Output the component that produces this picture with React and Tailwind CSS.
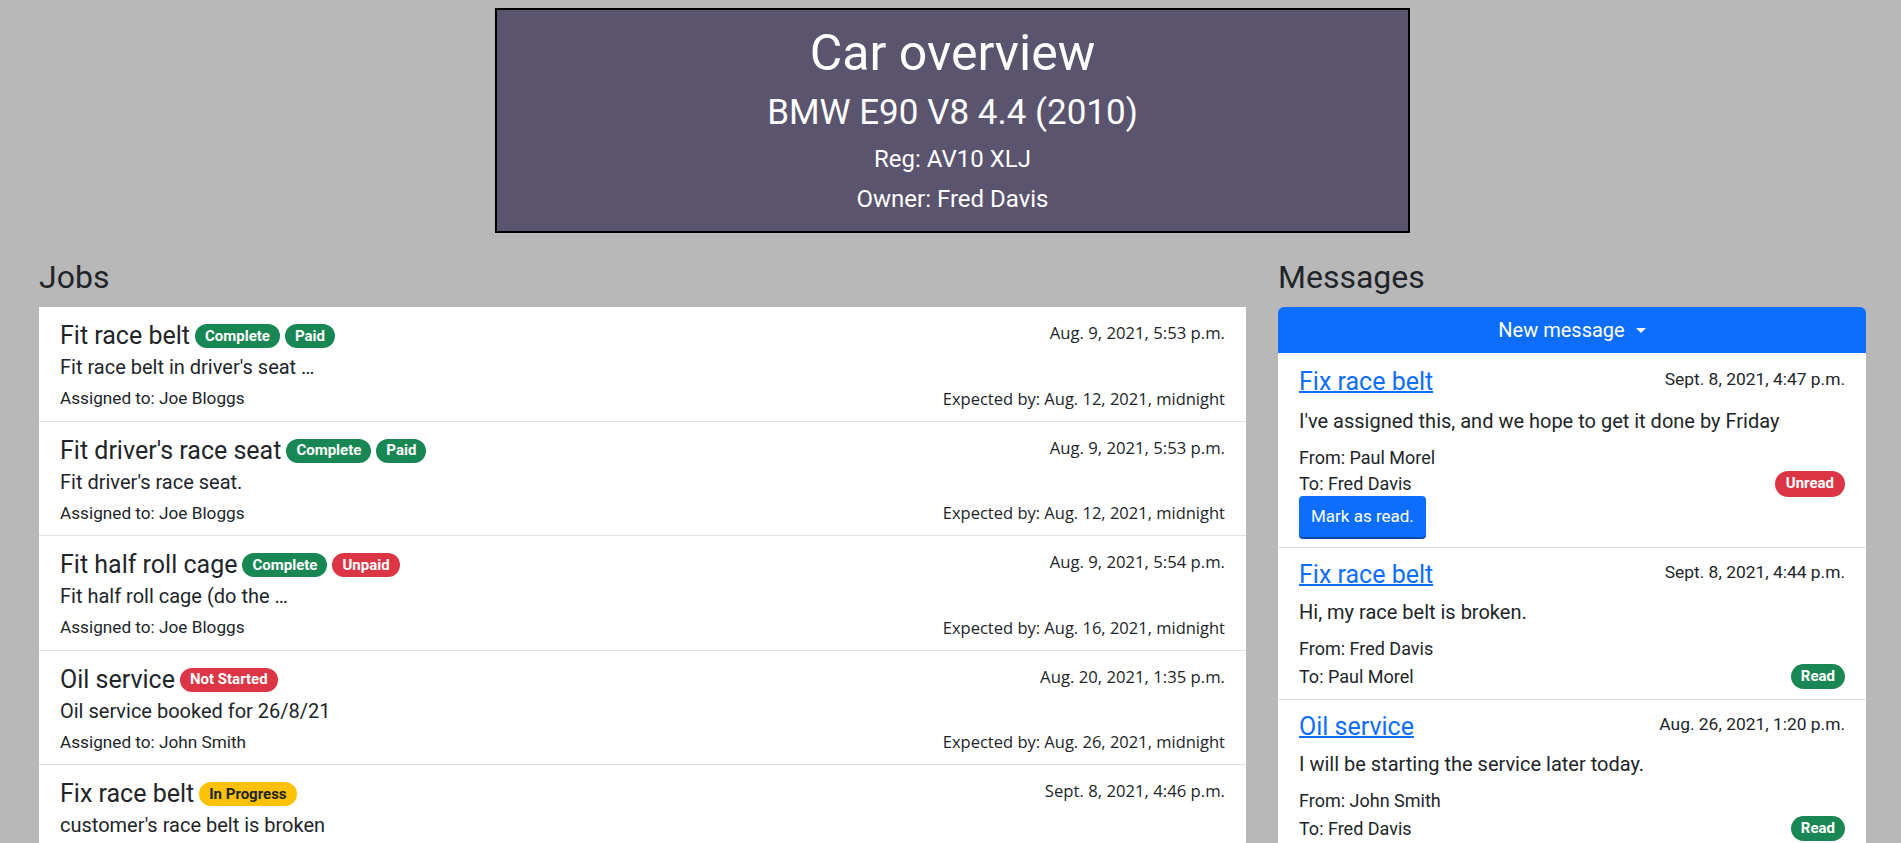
import React from "react";

const badgeColors = {
  green: "bg-[#198754] text-white",
  red: "bg-[#dc3545] text-white",
  yellow: "bg-[#ffc107] text-[#212529]",
};

const jobs = [
  {
    title: "Fit race belt",
    badges: [["Complete", "green"], ["Paid", "green"]],
    desc: "Fit race belt in driver's seat …",
    created: "Aug. 9, 2021, 5:53 p.m.",
    assigned: "Joe Bloggs",
    expected: "Aug. 12, 2021, midnight",
  },
  {
    title: "Fit driver's race seat",
    badges: [["Complete", "green"], ["Paid", "green"]],
    desc: "Fit driver's race seat.",
    created: "Aug. 9, 2021, 5:53 p.m.",
    assigned: "Joe Bloggs",
    expected: "Aug. 12, 2021, midnight",
  },
  {
    title: "Fit half roll cage",
    badges: [["Complete", "green"], ["Unpaid", "red"]],
    desc: "Fit half roll cage (do the …",
    created: "Aug. 9, 2021, 5:54 p.m.",
    assigned: "Joe Bloggs",
    expected: "Aug. 16, 2021, midnight",
  },
  {
    title: "Oil service",
    badges: [["Not Started", "red"]],
    desc: "Oil service booked for 26/8/21",
    created: "Aug. 20, 2021, 1:35 p.m.",
    assigned: "John Smith",
    expected: "Aug. 26, 2021, midnight",
  },
  {
    title: "Fix race belt",
    badges: [["In Progress", "yellow"]],
    desc: "customer's race belt is broken",
    created: "Sept. 8, 2021, 4:46 p.m.",
    assigned: "Joe Bloggs",
    expected: "Sept. 10, 2021, midnight",
  },
];

const messages = [
  {
    title: "Fix race belt",
    date: "Sept. 8, 2021, 4:47 p.m.",
    body: "I've assigned this, and we hope to get it done by Friday",
    from: "Paul Morel",
    to: "Fred Davis",
    read: false,
  },
  {
    title: "Fix race belt",
    date: "Sept. 8, 2021, 4:44 p.m.",
    body: "Hi, my race belt is broken.",
    from: "Fred Davis",
    to: "Paul Morel",
    read: true,
  },
  {
    title: "Oil service",
    date: "Aug. 26, 2021, 1:20 p.m.",
    body: "I will be starting the service later today.",
    from: "John Smith",
    to: "Fred Davis",
    read: true,
  },
];

const Badge = ({ label, color }) => (
  <span
    className={`inline-flex items-center h-[24px] px-[10px] rounded-full text-[15px] font-bold leading-none ${badgeColors[color]}`}
  >
    {label}
  </span>
);

const JobRow = ({ job }) => (
  <div className="border-b border-[#dee2e6] px-[21px] pt-[14px] pb-[5.6px]">
    {/* Title + created date */}
    <div className="flex justify-between items-start h-[30px]">
      <div className="flex items-center gap-[5px] h-[30px]">
        <span className="text-[25px] leading-[30px]">{job.title}</span>
        {job.badges.map(([label, color]) => (
          <Badge key={label} label={label} color={color} />
        ))}
      </div>
      <span className="font-['Open_Sans',sans-serif] text-[16.7px] leading-[24px]">
        {job.created}
      </span>
    </div>
    <div className="text-[20px] leading-[32px] h-[32px]">{job.desc}</div>
    <div className="flex justify-between items-center h-[32px]">
      <span className="text-[17.2px]">Assigned to: {job.assigned}</span>
      <span className="font-['Open_Sans',sans-serif] text-[16.5px]">
        Expected by: {job.expected}
      </span>
    </div>
  </div>
);

const MessageRow = ({ msg, first }) => (
  <div
    className={`border-b border-[#dee2e6] px-[21px] ${
      first ? "pt-[14px] pb-[10px]" : "pt-[12px] pb-[8px]"
    }`}
  >
    <div className="flex justify-between items-start h-[29px]">
      <a
        href="#"
        className="text-[25px] leading-[29px] text-[#0d6efd] underline decoration-[1.5px]"
      >
        {msg.title}
      </a>
      <span className="text-[17.4px] leading-[24px]">{msg.date}</span>
    </div>
    <div
      className={`text-[20px] leading-[27px] h-[27px] ${
        first ? "mt-[12px]" : "mt-[10px]"
      }`}
    >
      {msg.body}
    </div>
    <div className="mt-[9px] text-[18px] leading-[27px] h-[27px]">
      From: {msg.from}
    </div>
    <div
      className={`flex justify-between items-center text-[18px] ${
        first ? "h-[25px]" : "h-[29px]"
      }`}
    >
      <span>To: {msg.to}</span>
      {msg.read ? (
        <span className="inline-flex items-center h-[25px] px-[10px] rounded-full text-[15px] font-bold leading-none bg-[#198754] text-white">
          Read
        </span>
      ) : (
        <span className="inline-flex items-center h-[26px] px-[11px] rounded-full text-[15px] font-bold leading-none bg-[#dc3545] text-white">
          Unread
        </span>
      )}
    </div>
    {!msg.read && (
      <button className="h-[41px] px-[12px] rounded-[4px] bg-[#0d6efd] text-white text-[17px] shadow-[0_2px_0_#0a4aa8]">
        Mark as read.
      </button>
    )}
  </div>
);

export default function App() {
  return (
    <div className="min-h-screen bg-[#b8b8b8] text-[#212529] font-['Roboto',sans-serif] pt-[8px]">
      {/* Car header */}
      <div className="pl-[4px]">
        <div className="w-[915px] mx-auto border-2 border-black bg-[#5a546e] text-white text-center pt-[14px] pb-[18px]">
          <div className="text-[50px] leading-[58px]">Car overview</div>
          <div className="text-[35px] leading-[40px] mt-[10.5px]">
            BMW E90 V8 4.4 (2010)
          </div>
          <div className="text-[24px] leading-[28px] mt-[12.5px]">
            Reg: AV10 XLJ
          </div>
          <div className="text-[24px] leading-[28px] mt-[12px]">
            Owner: Fred Davis
          </div>
        </div>
      </div>

      <div className="flex pl-[39px] gap-[32px] mt-[25px]">
        {/* Jobs */}
        <div className="w-[1207px] shrink-0">
          <h2 className="text-[32px] leading-[38px] h-[38px] mb-[11px]">Jobs</h2>
          <div className="bg-white">
            {jobs.map((job, i) => (
              <JobRow key={i} job={job} />
            ))}
          </div>
        </div>

        {/* Messages */}
        <div className="w-[588px] shrink-0">
          <h2 className="text-[32px] leading-[38px] h-[38px] mb-[11px]">
            Messages
          </h2>
          <button className="w-full h-[46px] rounded-t-[6px] bg-[#0d6efd] text-white text-[20px] flex items-center justify-center">
            New message
            <span className="ml-[11px] w-0 h-0 border-l-[5px] border-r-[5px] border-t-[5px] border-l-transparent border-r-transparent border-t-white" />
          </button>
          <div className="bg-white">
            {messages.map((msg, i) => (
              <MessageRow key={i} msg={msg} first={i === 0} />
            ))}
          </div>
        </div>
      </div>
    </div>
  );
}
